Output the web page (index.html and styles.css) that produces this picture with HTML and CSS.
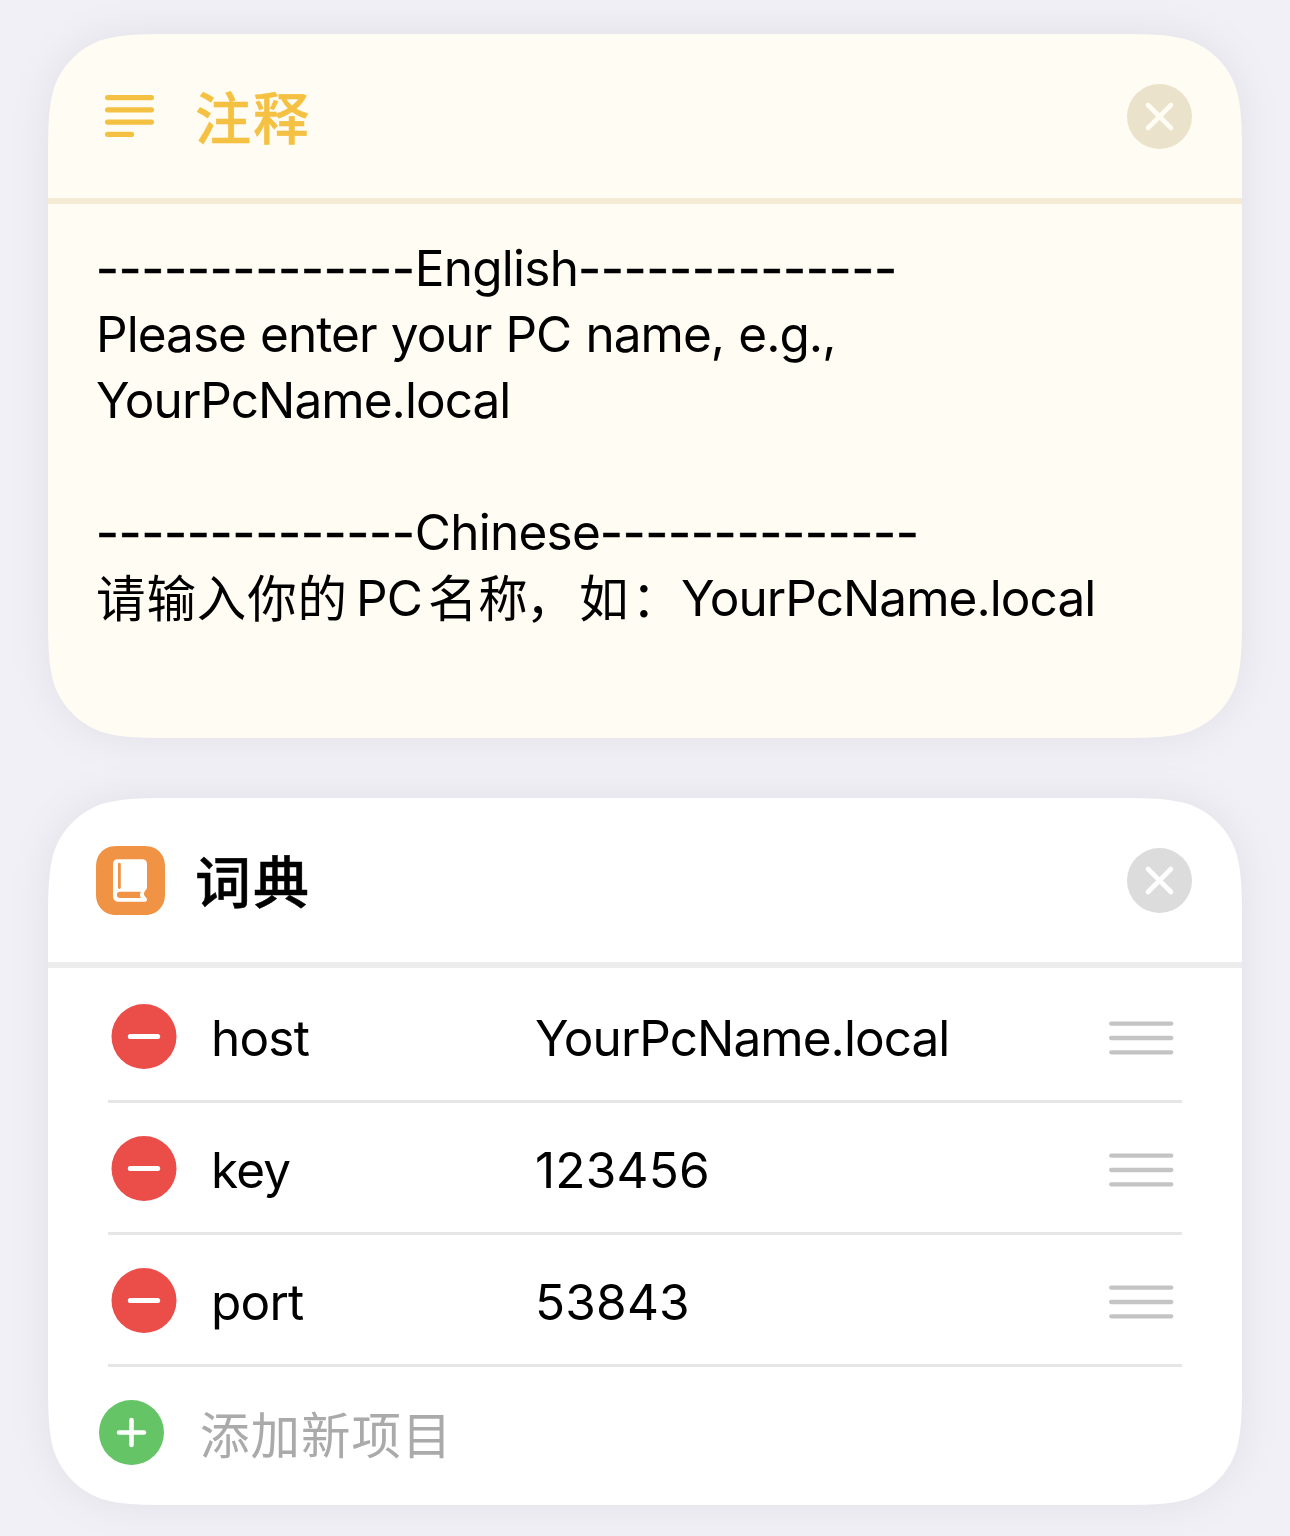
FILE: index.html
```html
<!DOCTYPE html>
<html lang="zh-CN">
<head>
<meta charset="utf-8">
<title>快捷指令</title>
<link rel="stylesheet" href="styles.css">
</head>
<body>
<main class="actions">
  <div class="shadow">
    <section class="card card-note">
      <header class="head">
        <svg class="lines" width="49" height="42" viewBox="0 0 49 42"><path d="M2.5 2.6H46.5M2.5 14.9H46.5M2.5 27.2H46.5M2.5 39.4H26.5"/></svg>
        <h2 class="title">注释</h2>
        <svg class="close" width="65" height="65" viewBox="0 0 65 65"><circle cx="32.5" cy="32.5" r="32.5"/><path d="M21 21L44 44M44 21L21 44"/></svg>
      </header>
      <div class="note">
        <p><span class="dash">--------------</span><span class="lang">English</span><span class="dash">--------------</span></p>
        <p class="hint">Please enter your PC name, e.g.,</p>
        <p>YourPcName.local</p>
        <p>&nbsp;</p>
        <p><span class="dash">--------------</span><span class="lang">Chinese</span><span class="dash">--------------</span></p>
        <p class="zh-line"><span class="zh">请输入你的</span><span class="pc">PC</span><span class="zh">名称<span class="mark">，</span>如<span class="colon">：</span></span>YourPcName.local</p>
      </div>
    </section>
  </div>
  <div class="shadow">
    <section class="card card-dict">
      <header class="head">
        <svg class="tile" width="69" height="69" viewBox="0 0 69 69">
          <path class="tile-bg" d="M24 0H45C50 0 53 0 56.500 1.300C61.500 3 66 7.500 67.700 12.500C69 16 69 19 69 24V45C69 50 69 53 67.700 56.500C66 61.500 61.500 66 56.500 67.700C53 69 50 69 45 69H24C19 69 16 69 12.500 67.700C7.500 66 3 61.500 1.300 56.500C0 53 0 50 0 45V24C0 19 0 16 1.300 12.500C3 7.500 7.500 3 12.500 1.300C16 0 19 0 24 0Z"/>
          <path class="book" d="M22 13.300H46Q51 13.300 51 18.300V41.500Q51 43 49.500 44.300Q46.500 48 49.300 50.800Q51 52.300 51 54Q51 55.800 49 55.800H23Q17 55.800 17 50V18.300Q17 13.300 22 13.300Z"/>
          <path class="tile-bg" d="M24 45.700H45Q42.800 48.800 45 52H24Q20.900 52 20.900 48.850Q20.900 45.700 24 45.700Z"/>
          <rect class="tile-bg" x="22" y="16.700" width="2.800" height="26.300" rx="1.400"/>
        </svg>
        <h2 class="title">词典</h2>
        <svg class="close" width="65" height="65" viewBox="0 0 65 65"><circle cx="32.500" cy="32.500" r="32.500"/><path d="M21 21L44 44M44 21L21 44"/></svg>
      </header>
      <div class="rows">
        <div class="row">
          <svg class="minus" width="66" height="65" viewBox="0 0 66 65"><circle cx="33" cy="32.500" r="32.500"/><path d="M19.300 32.500H46.700"/></svg>
          <span class="key">host</span><span class="value">YourPcName.local</span>
          <svg class="grip" width="65" height="34" viewBox="0 0 65 34"><path d="M2.200 2.700H62.300M2.200 17H62.300M2.200 31.300H62.300"/></svg>
        </div>
        <div class="row">
          <svg class="minus" width="66" height="65" viewBox="0 0 66 65"><circle cx="33" cy="32.500" r="32.500"/><path d="M19.300 32.500H46.700"/></svg>
          <span class="key">key</span><span class="value number">123456</span>
          <svg class="grip" width="65" height="34" viewBox="0 0 65 34"><path d="M2.200 2.700H62.300M2.200 17H62.300M2.200 31.300H62.300"/></svg>
        </div>
        <div class="row">
          <svg class="minus" width="66" height="65" viewBox="0 0 66 65"><circle cx="33" cy="32.500" r="32.500"/><path d="M19.300 32.500H46.700"/></svg>
          <span class="key">port</span><span class="value number">53843</span>
          <svg class="grip" width="65" height="34" viewBox="0 0 65 34"><path d="M2.200 2.700H62.300M2.200 17H62.300M2.200 31.300H62.300"/></svg>
        </div>
      </div>
      <div class="add">
        <svg class="plus" width="65" height="65" viewBox="0 0 65 65"><circle cx="32.500" cy="32.500" r="32.500"/><path d="M20 32.500H45M32.500 20V45"/></svg>
        <span class="add-text">添加新项目</span>
      </div>
    </section>
  </div>
</main>
</body>
</html>
```
FILE: styles.css
```css
* { box-sizing: border-box; }

body {
  margin: 0;
  height: 1536px;
  overflow: hidden;
  background: #f1f0f6;
  color: #000;
  font-family: Inter, "Noto Sans CJK SC", sans-serif;
  font-size: 49.5px;
  letter-spacing: -0.95px;
}

h2, p { margin: 0; }
svg { display: block; flex: none; }

.actions {
  display: flex;
  flex-direction: column;
  gap: 60px;
  padding: 34px 48px 0;
}

.shadow { filter: drop-shadow(0 0 20px rgba(0, 0, 10, 0.065)); }

.card { width: 1194px; }

/* Continuous-curvature corners */
.card-note {
  height: 704px;
  background: #fffcf3;
  clip-path: path("M136 0H1058C1098 0 1121 0 1141 6.300C1162.700 14.200 1179.800 31.300 1187.700 53C1194 73 1194 96 1194 136V568C1194 608 1194 631 1187.700 651C1179.800 672.700 1162.700 689.800 1141 697.700C1121 704 1098 704 1058 704H136C96 704 73 704 53 697.700C31.300 689.800 14.200 672.700 6.300 651C0 631 0 608 0 568V136C0 96 0 73 6.300 53C14.200 31.300 31.300 14.200 53 6.300C73 0 96 0 136 0Z");
}

.card-dict {
  height: 707px;
  background: #fff;
  clip-path: path("M136 0H1058C1098 0 1121 0 1141 6.300C1162.700 14.200 1179.800 31.300 1187.700 53C1194 73 1194 96 1194 136V571C1194 611 1194 634 1187.700 654C1179.800 675.700 1162.700 692.800 1141 700.700C1121 707 1098 707 1058 707H136C96 707 73 707 53 700.700C31.300 692.800 14.200 675.700 6.300 654C0 634 0 611 0 571V136C0 96 0 73 6.300 53C14.200 31.300 31.300 14.200 53 6.300C73 0 96 0 136 0Z");
}

.head {
  display: flex;
  align-items: center;
  height: 170px;
  padding: 0 50px 0 48px;
  border-bottom: 6px solid #ededed;
}
.card-note .head { border-color: #f5ebd5; }

.title {
  flex: 1;
  margin-left: 30px;
  font-size: 56px;
  line-height: 80px;
  font-weight: 500;
  font-family: "Noto Sans CJK SC", sans-serif;
  letter-spacing: 2px;
  padding-bottom: 3px;
  -webkit-text-stroke: 0.5px currentColor;
}
.card-note .title { color: #f5c142; margin-left: 41px; }

.lines { margin-left: 9px; }
.lines path { fill: none; stroke: #f5c142; stroke-width: 5.200; stroke-linecap: round; }

.close { fill: #dcdcdc; }
.close path { fill: none; stroke: #fff; stroke-width: 4.600; stroke-linecap: round; }
.card-note .close { fill: #eae2ca; }
.card-note .close path { stroke: #fffcf3; }

.tile-bg { fill: #f09345; }
.book { fill: #fff; }

.note { padding: 31px 48px 0; }
.note p { height: 66px; line-height: 66px; white-space: nowrap; }
.note .hint { word-spacing: 1.1px; }
.note .zh-line { margin-top: -3px; }
.zh { font-family: "Noto Sans CJK SC", sans-serif; letter-spacing: 0.9px; position: relative; top: 1px; }
.mark { margin: 0 3px 0 -3px; }
.colon { margin: 0 -1px 0 2px; }
.dash { letter-spacing: 0; -webkit-text-stroke: 0.6px currentColor; }
.lang { letter-spacing: -0.75px; }
.pc { margin: 0 6px 0 8px; }

.rows { padding: 3px 60px 0; }
.row {
  display: flex;
  align-items: center;
  height: 132px;
  padding: 0 8px 0 3px;
  border-bottom: 3px solid #e6e6e6;
}
.minus { fill: #eb4d48; margin-top: 2px; }
.minus path { stroke: #fff; stroke-width: 5; stroke-linecap: round; }
.key { width: 324px; margin-left: 34px; padding-top: 4px; letter-spacing: -0.8px; }
.value { flex: 1; padding-top: 4px; }
.value.number { letter-spacing: 0.2px; }
.grip { margin-top: 5px; }
.grip path { stroke: #c4c4c4; stroke-width: 4.300; stroke-linecap: round; }

.add { display: flex; align-items: center; height: 130px; padding-left: 51px; }
.plus { fill: #65c466; }
.plus path { stroke: #fff; stroke-width: 4.600; stroke-linecap: round; }
.add-text {
  margin-left: 36px;
  color: #aaa;
  font-family: "Noto Sans CJK SC", sans-serif;
  letter-spacing: 1px;
}
```
